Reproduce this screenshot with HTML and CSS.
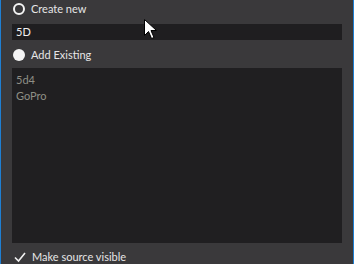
FILE: index.html
```html
<!DOCTYPE html>
<html lang="en">
<head>
  <meta charset="UTF-8">
  <title>Select Source</title>
  <link rel="stylesheet" href="styles.css">
</head>
<body>
  <div class="dialog">
    <label class="option">
      <span class="radio radio-empty"></span>
      <span class="label">Create new</span>
    </label>
    <div class="name-field">5D</div>
    <label class="option add-row">
      <span class="radio radio-filled"></span>
      <span class="label">Add Existing</span>
    </label>
    <div class="source-list">
      <div class="item">5d4</div>
      <div class="item">GoPro</div>
    </div>
    <label class="option check-row">
      <svg class="check" width="12" height="12" viewBox="0 0 12 12">
        <path d="M1 6.5 L4.5 10 L11 2" fill="none" stroke="#f2f2f2" stroke-width="1.6"/>
      </svg>
      <span class="label">Make source visible</span>
    </label>
    <svg class="cursor" width="14" height="22" viewBox="0 0 14 22">
      <path d="M0.5 0.5 L0.5 16.5 L4.5 12.5 L7.5 19.5 L10 18.5 L7 11.5 L12.5 11.5 Z" fill="#fff" stroke="#000" stroke-width="1"/>
    </svg>
  </div>
</body>
</html>
```
FILE: styles.css
```css
html, body {
  margin: 0;
  padding: 0;
  background-color: #3a393b;
}
.dialog {
  position: relative;
  width: 354px;
  height: 264px;
  border-left: 1px solid #1f7fd2;
  border-right: 1px solid #1f7fd2;
  background-color: #3a393b;
  font-family: Lato, "Noto Sans", sans-serif;
  font-size: 11px;
  color: #e6e6e6;
  padding: 0 11px;
  box-sizing: border-box;
}
.option {
  display: flex;
  align-items: center;
  height: 18px;
}
.radio {
  width: 12px;
  height: 12px;
  border-radius: 50%;
  box-sizing: border-box;
  margin: 0 6px 0 1px;
}
.radio-empty {
  border: 2.5px solid #f4f4f4;
}
.radio-filled {
  background-color: #f4f4f4;
}
.label {
  line-height: 18px;
}
.name-field {
  margin-top: 6px;
  height: 16px;
  line-height: 16px;
  background-color: #1f1e20;
  padding-left: 4px;
  color: #f0f0f0;
  width: 330px;
  box-sizing: border-box;
}
.add-row {
  margin-top: 6px;
}
.source-list {
  margin-top: 4px;
  width: 330px;
  height: 175px;
  background-color: #201f21;
  padding: 4px 4px;
  box-sizing: border-box;
}
.item {
  color: #8f8f86;
  line-height: 16px;
}
.check-row {
  margin-top: 5px;
}
.check {
  margin: 0 6px 0 2px;
}
.cursor {
  position: absolute;
  left: 143px;
  top: 19px;
}
```
